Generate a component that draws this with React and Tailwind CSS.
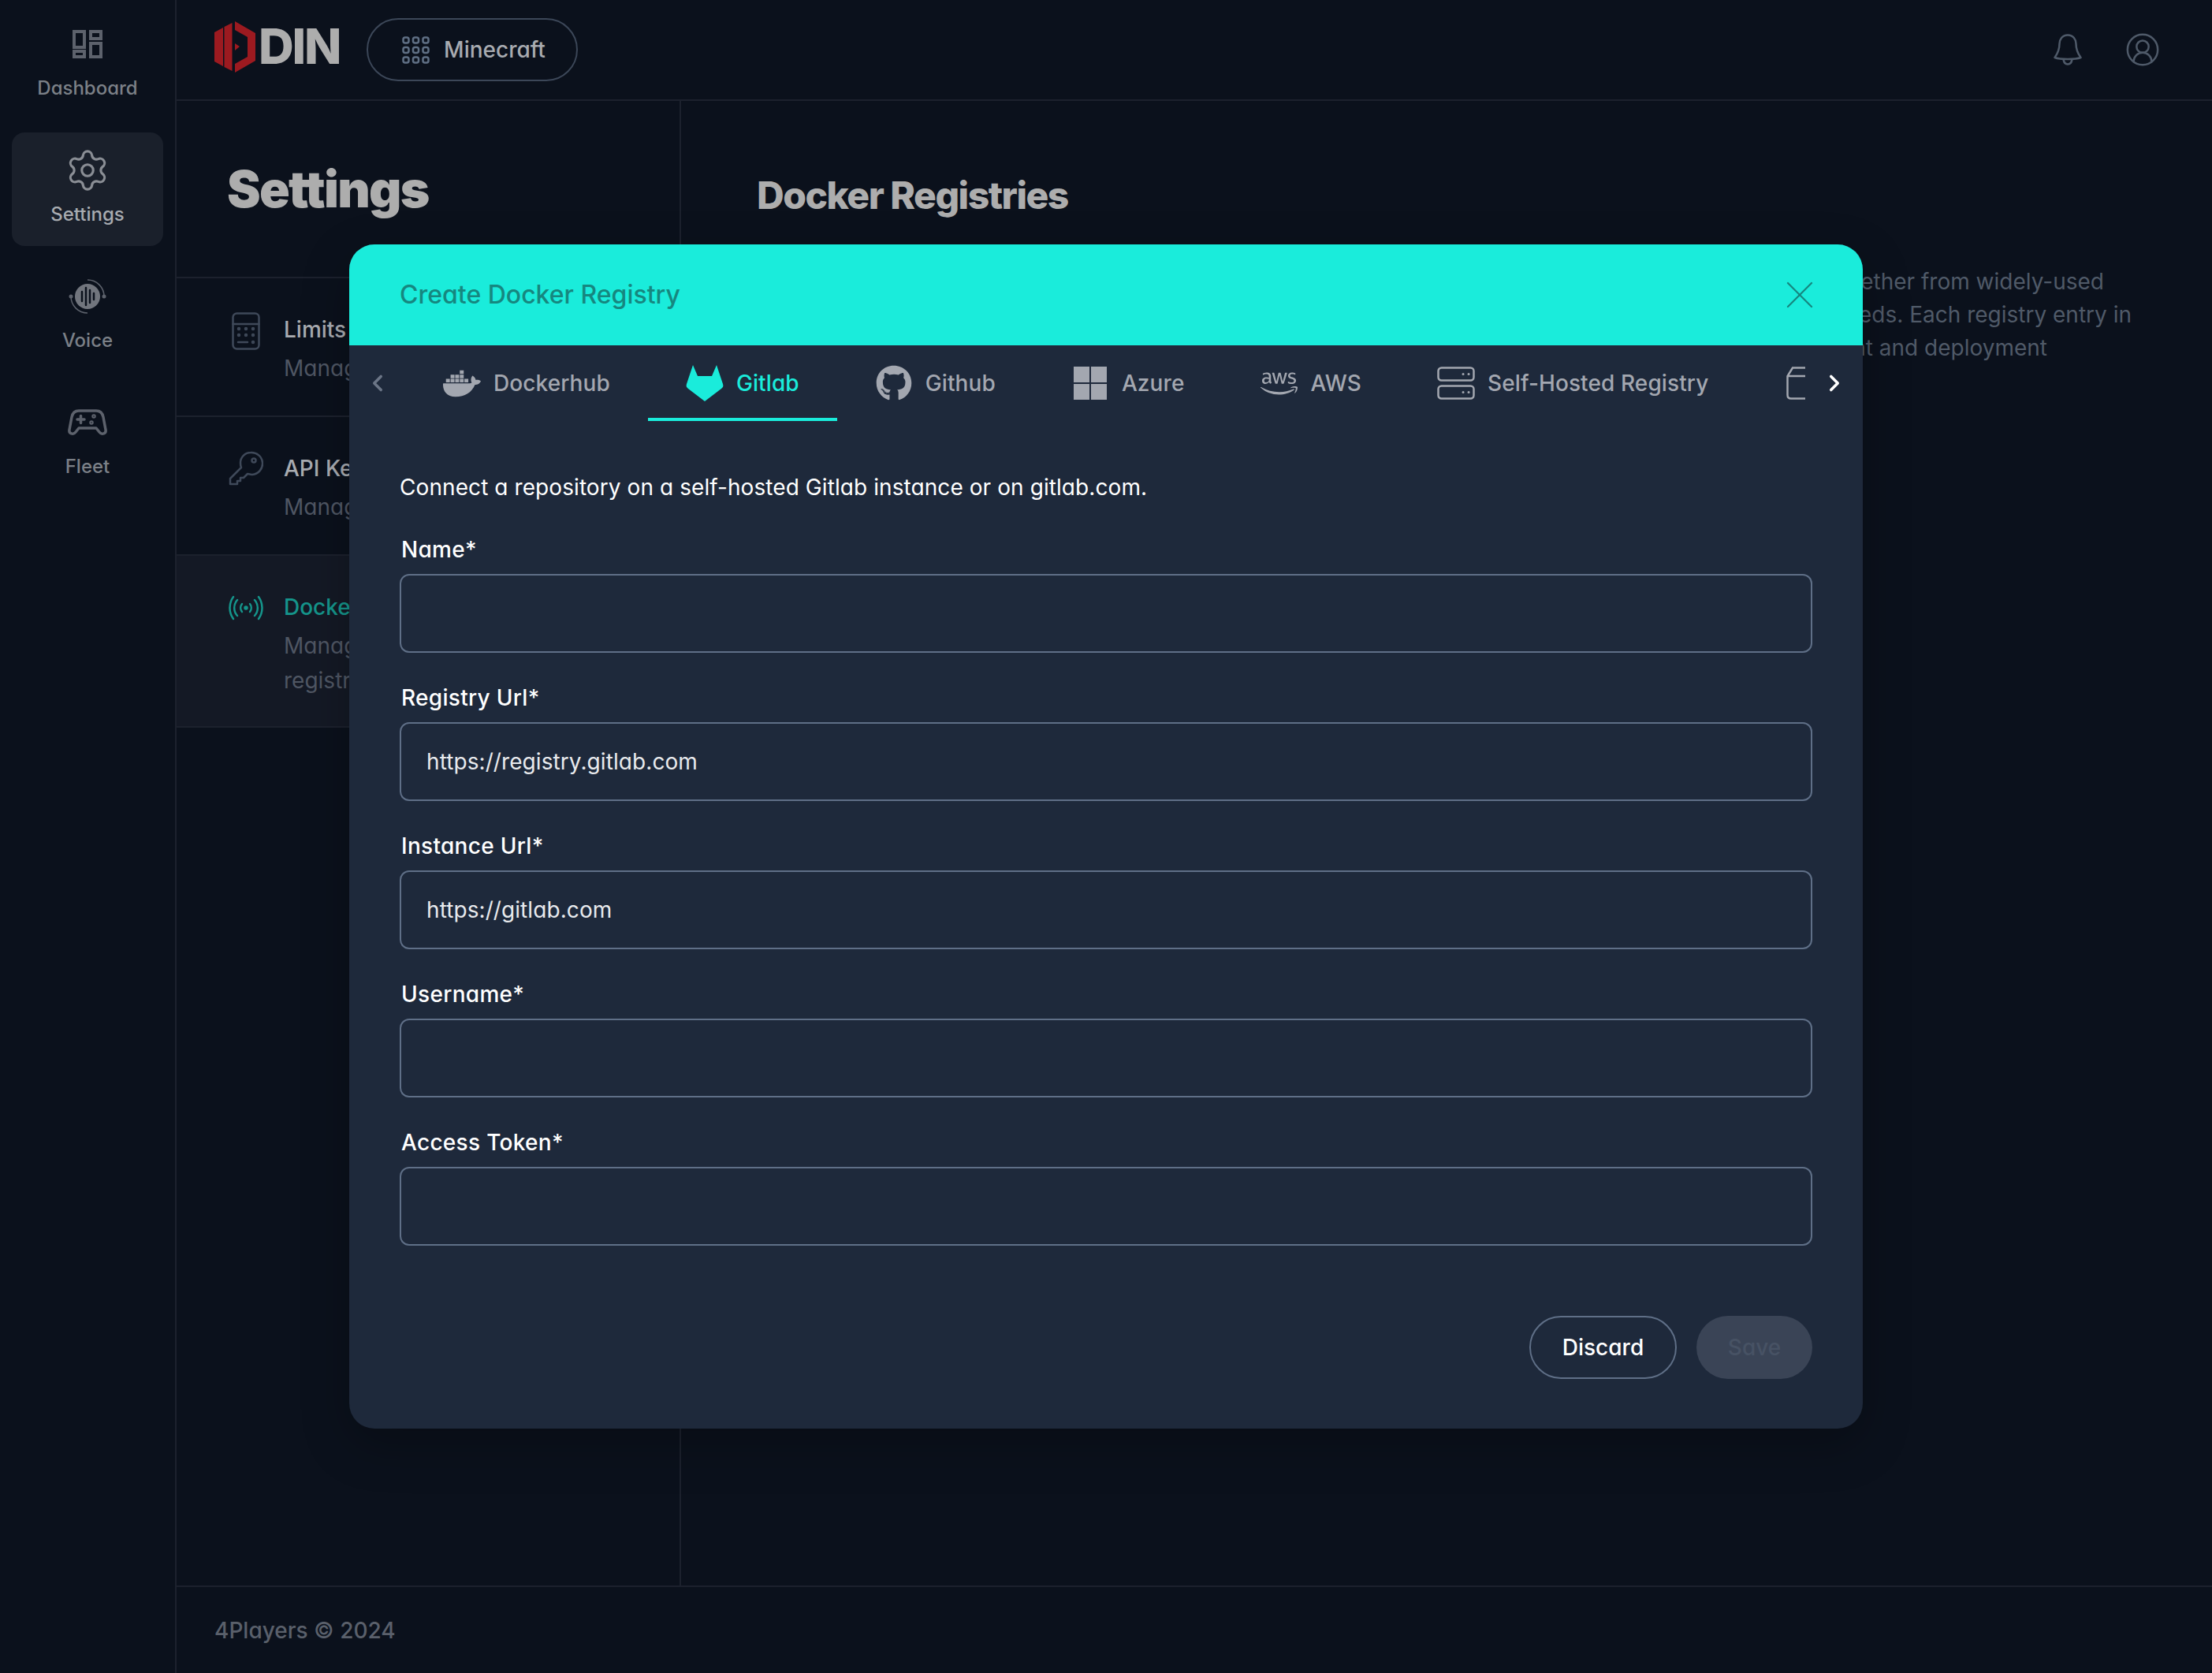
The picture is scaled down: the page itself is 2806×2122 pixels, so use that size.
import { ChevronLeft, ChevronRight, CircleUserRound, Settings, X } from 'lucide-react';
import { FaAws, FaDocker, FaGithub } from 'react-icons/fa';

const fields = [
  { label: 'Name*', value: '' },
  { label: 'Registry Url*', value: 'https://registry.gitlab.com' },
  { label: 'Instance Url*', value: 'https://gitlab.com' },
  { label: 'Username*', value: '' },
  { label: 'Access Token*', value: '' },
];

const OdinMark = () => (
  <svg width="52" height="65" viewBox="0 0 52 65" fill="#9c1a20">
    <path d="M0 14L11 8V57L0 51Z" />
    <path d="M12.500 7L22.500 2V63L12.500 58Z" />
    <path d="M26 0L52 15V50L26 65V54L42 45V20L26 11Z" />
    <path d="M26 28L32 32L26 37Z" />
  </svg>
);

const GridIcon = () => (
  <svg width="35" height="35" viewBox="0 0 35 35" fill="none" stroke="#5f6f84" strokeWidth="2.500">
    {[1.500, 14, 26.500].map((y) =>
      [1.500, 14, 26.500].map((x) => <rect key={`${x}-${y}`} x={x} y={y} width="7" height="7" rx="2.500" />),
    )}
  </svg>
);

const DashboardIcon = () => (
  <svg width="38" height="36" viewBox="0 0 38 36" fill="none" stroke="#5d626c" strokeWidth="4">
    <rect x="2" y="2" width="13" height="20" />
    <rect x="23" y="2" width="13" height="9" />
    <rect x="2" y="27" width="13" height="7" />
    <rect x="23" y="17" width="13" height="17" />
  </svg>
);

const VoiceIcon = () => (
  <svg width="50" height="46" viewBox="0 0 50 46" fill="none">
    <circle cx="25" cy="23" r="16" fill="#71757d" />
    <path d="M18 17v12M23 12v22M28 15v16M33 19v8" stroke="#0b111c" strokeWidth="2.500" strokeLinecap="round" />
    <path d="M4 23a21 21 0 0 0 21 21M25 2a21 21 0 0 1 21 21" stroke="#5d626c" strokeWidth="1.500" />
    <circle cx="4" cy="23" r="2.500" fill="#5d626c" />
    <circle cx="46" cy="23" r="2.500" fill="#5d626c" />
  </svg>
);

const FleetIcon = () => (
  <svg width="50" height="34" viewBox="0 0 50 34" fill="none" stroke="#5d626c" strokeWidth="3.500" strokeLinecap="round" strokeLinejoin="round">
    <path d="M14 2h22c5 0 8 3 9 8l3 16c1 5-5 7-8 3l-4-5H14l-4 5c-3 4-9 2-8-3l3-16c1-5 4-8 9-8Z" />
    <path d="M12 13h9M16.500 8.500v9" />
    <circle cx="33" cy="9" r="1" />
    <circle cx="30" cy="17" r="1" />
  </svg>
);

const CalculatorIcon = () => (
  <svg width="36" height="48" viewBox="0 0 36 48" fill="none" stroke="#3f4959" strokeWidth="2.500" strokeLinecap="round">
    <rect x="1.500" y="1.500" width="33" height="45" rx="5" />
    <path d="M1.500 15h33" />
    {[21, 29].map((y) => [9, 18, 27].map((x) => <circle key={`${x}-${y}`} cx={x} cy={y} r="1" />))}
    <path d="M8 38h12" />
    <circle cx="27" cy="38" r="1" />
  </svg>
);

const KeyIcon = () => (
  <svg width="44" height="44" viewBox="0 0 44 44" fill="none" stroke="#3f4959" strokeWidth="2.500" strokeLinejoin="round">
    <path d="M28 2a14 14 0 0 1 2 28c-3 0-5-1-6-1l-5 5h-4v4h-4v4H2v-7l14-14c-1-2-1-4-1-6A13 13 0 0 1 28 2Z" />
    <circle cx="32" cy="12" r="2.500" />
  </svg>
);

const AntennaIcon = () => (
  <svg width="44" height="32" viewBox="0 0 44 32" className="mt-[7px]" fill="none" stroke="#15958b" strokeWidth="2.500" strokeLinecap="round">
    <circle cx="22" cy="16" r="1.500" fill="#15958b" />
    <path d="M17 11a8 8 0 0 0 0 10M27 11a8 8 0 0 1 0 10" />
    <path d="M11 6a15 15 0 0 0 0 20M33 6a15 15 0 0 1 0 20" />
    <path d="M6 2a24 24 0 0 0 0 28M38 2a24 24 0 0 1 0 28" />
  </svg>
);

const BellIcon = () => (
  <svg width="36" height="40" viewBox="0 0 36 40" fill="none" stroke="#4f5a69" strokeWidth="2.500" strokeLinejoin="round">
    <path d="M18 1.500c-7 0-10.500 5.500-10.500 11 0 8-2 12-6 17.500 5 2 11 2 16.500 2s11.500 0 16.500-2c-4-5.500-6-9.500-6-17.500 0-5.500-3.500-11-10.500-11Z" />
    <path d="M12.500 32c.5 4 2.500 6.500 5.500 6.500s5-2.500 5.500-6.500" />
  </svg>
);

const GitlabIcon = () => (
  <svg width="48" height="46" viewBox="0 0 48 46" fill="currentColor">
    <path d="M9 0L15 14H33L39 0L47 24C48 27 47 28 45 30L24 46L3 30C1 28 0 27 1 24Z" />
  </svg>
);

const AzureIcon = () => (
  <svg width="42" height="42" viewBox="0 0 42 42" fill="#a3a7b0">
    <rect width="20" height="20" />
    <rect x="22" width="20" height="20" />
    <rect y="22" width="20" height="20" />
    <rect x="22" y="22" width="20" height="20" />
  </svg>
);

const ServerIcon = () => (
  <svg width="48" height="42" viewBox="0 0 48 42" fill="none" stroke="#a3a7b0" strokeWidth="2.500" strokeLinecap="round">
    <rect x="1.500" y="1.500" width="45" height="16" rx="4" />
    <rect x="1.500" y="24.500" width="45" height="16" rx="4" />
    <path d="M33 9.500h.1M40 9.500h.1M33 32.500h.1M40 32.500h.1" strokeWidth="3" />
  </svg>
);

const Tab = ({ icon, label, active }) => (
  <div
    className={`flex h-[96px] shrink-0 items-center gap-4 border-b-4 px-12 pt-1 text-[28px] font-medium tracking-[0.1px] ${
      active ? 'border-[#1aecdb] text-[#1aecdb]' : 'border-transparent text-[#a3a7b0]'
    }`}
  >
    <span className="flex w-12 justify-center">{icon}</span>
    <span>{label}</span>
  </div>
);

const NavItem = ({ icon, label, active }) => (
  <div
    className={`flex h-[144px] w-[192px] flex-col items-center justify-center gap-[13px] rounded-2xl text-[24px] font-medium ${
      active ? 'bg-[#1a202b] text-[#a8abb0]' : 'text-[#7b8087]'
    }`}
  >
    <div className="flex h-[50px] items-center">{icon}</div>
    <span className="leading-[36px]">{label}</span>
  </div>
);

const SettingsRow = ({ icon, title, text, active }) => (
  <div className={`flex gap-[26px] border-b-2 border-[#1c212d] pt-[43px] pl-[66px] ${active ? 'bg-[#141925] pb-[36px]' : 'pb-[38px]'}`}>
    <div className="flex w-[44px] shrink-0 items-start justify-center">{icon}</div>
    <div className="flex flex-col gap-[5px] text-[28px] leading-[44px]">
      <span className={`font-medium ${active ? 'text-[#15958b]' : 'text-[#a8abb0]'}`}>{title}</span>
      <span className="font-normal text-[#4f5663]">{text}</span>
    </div>
  </div>
);

export default function App() {
  return (
    <div className="relative flex h-screen w-screen overflow-hidden bg-[#0b111c] font-['Inter',sans-serif] [font-feature-settings:'cv11']">
      {/* Sidebar */}
      <aside className="flex w-[224px] shrink-0 flex-col items-center gap-4 border-r-2 border-[#1c212d] pt-2">
        <NavItem icon={<DashboardIcon />} label="Dashboard" />
        <NavItem icon={<Settings size={58} strokeWidth={1.300} color="#8a8e95" />} label="Settings" active />
        <NavItem icon={<VoiceIcon />} label="Voice" />
        <NavItem icon={<FleetIcon />} label="Fleet" />
      </aside>

      <div className="flex min-w-0 flex-1 flex-col">
        {/* Header */}
        <header className="flex h-[128px] shrink-0 items-center border-b-2 border-[#1c212d] pr-[65px] pl-[48px]">
          <div className="mb-[8px] flex items-center gap-[4px]">
            <OdinMark />
            <span className="text-[62px] leading-none font-extrabold tracking-[-2.300px] text-[#adadad]">DIN</span>
          </div>
          <div className="ml-[34px] flex h-[80px] w-[268px] items-center gap-[18px] rounded-full border-2 border-[#3c4758] pl-[43px] text-[28px] font-medium text-[#a8abb0]">
            <GridIcon />
            <span>Minecraft</span>
          </div>
          <div className="ml-auto flex items-center gap-[54px]">
            <BellIcon />
            <CircleUserRound size={46} strokeWidth={1.300} color="#4f5a69" />
          </div>
        </header>

        <div className="flex min-h-0 flex-1">
          {/* Settings list */}
          <div className="w-[640px] shrink-0 border-r-2 border-[#1c212d]">
            <div className="flex h-[225px] items-start border-b-2 border-[#1c212d] pt-[70px] pl-[64px]">
              <h1 className="text-[64px] leading-[84px] font-black tracking-[-1.700px] text-[#adadad]">Settings</h1>
            </div>
            <SettingsRow icon={<CalculatorIcon />} title="Limits" text="Manage your limits" />
            <SettingsRow icon={<KeyIcon />} title="API Keys" text="Manage your API keys" />
            <SettingsRow
              icon={<AntennaIcon />}
              title="Docker Registries"
              text="Manage your private Docker image registries"
              active
            />
          </div>

          {/* Page content */}
          <main className="min-w-0 flex-1 pt-[88px] pl-[96px]">
            <h2 className="text-[48px] leading-[64px] font-extrabold tracking-[-1.500px] text-[#adadad]">Docker Registries</h2>
            <div className="mt-[56px] text-[28px] leading-[42px] whitespace-nowrap text-[#505a68] [font-feature-settings:normal]">
              <p className="flex w-[1709px] justify-end">
                Manage your Docker registries here and connect them to your fleets and builds, whether from widely-used
              </p>
              <p className="flex w-[1744px] justify-end">
                services or your own self-hosted setup, depending on your specific project needs. Each registry entry in
              </p>
              <p className="flex w-[1637px] justify-end">
                this list can then be selected for the automated build, image management and deployment
              </p>
            </div>
          </main>
        </div>

        {/* Footer */}
        <footer className="flex h-[111px] shrink-0 items-center border-t-2 border-[#1c212d] pl-[48px] text-[28px] font-medium text-[#5a606b]">
          4Players © 2024
        </footer>
      </div>

      {/* Modal */}
      <div className="absolute inset-0 flex items-center justify-center">
        <div className="flex h-[1502px] w-[1920px] flex-col overflow-hidden rounded-[32px] bg-[#1e293b] shadow-[0_20px_60px_rgba(0,0,0,0.25)]">
          <div className="flex h-[128px] shrink-0 items-center justify-between bg-[#1aecdb] pr-[50px] pl-[64px]">
            <span className="text-[32px] font-medium text-[#16877f]">Create Docker Registry</span>
            <X size={60} strokeWidth={0.900} color="#16877f" />
          </div>

          <div className="flex h-[96px] shrink-0 items-center">
            <div className="flex w-[71px] shrink-0 justify-center">
              <ChevronLeft size={34} strokeWidth={2.500} color="#6b7586" />
            </div>
            <div className="flex min-w-0 flex-1 overflow-hidden">
              <Tab icon={<FaDocker size={49} color="#a3a7b0" />} label="Dockerhub" />
              <Tab icon={<GitlabIcon />} label="Gitlab" active />
              <Tab icon={<FaGithub size={46} color="#a3a7b0" />} label="Github" />
              <Tab icon={<AzureIcon />} label="Azure" />
              <Tab icon={<FaAws size={47} color="#a3a7b0" />} label="AWS" />
              <Tab icon={<ServerIcon />} label="Self-Hosted Registry" />
              <Tab
                icon={
                  <svg width="42" height="42" viewBox="0 0 42 42" fill="none" stroke="#a3a7b0" strokeWidth="2.500">
                    <path d="M24 1.500H8L1.500 12v24c0 3 2 4.500 4.500 4.500h18M1.500 12H24" />
                  </svg>
                }
                label=""
              />
            </div>
            <div className="flex w-[73px] shrink-0 justify-center">
              <ChevronRight size={34} strokeWidth={2.500} color="#ffffff" />
            </div>
          </div>

          <div className="flex flex-1 flex-col px-[64px] pt-[62px]">
            <p className="text-[28px] leading-[44px] tracking-[0.08px] text-white">
              Connect a repository on a self-hosted Gitlab instance or on gitlab.com.
            </p>
            <div className="mt-[35px] flex flex-col gap-[35px]">
              {fields.map((field) => (
                <label key={field.label} className="flex flex-col gap-[9px]">
                  <span className="pl-[2px] text-[28px] leading-[44px] font-medium tracking-[0.3px] text-white">{field.label}</span>
                  <input
                    readOnly
                    value={field.value}
                    className="h-[100px] w-full rounded-xl border-2 border-[#5f6f87] bg-transparent px-[32px] text-[28px] tracking-[0.08px] text-[#e8eaed] outline-none"
                  />
                </label>
              ))}
            </div>
            <div className="mt-[89px] flex justify-end gap-[25px] text-[28px] font-medium">
              <button className="h-[80px] w-[187px] rounded-full border-2 border-[#5f6f87] text-white">Discard</button>
              <button className="h-[80px] w-[147px] rounded-full bg-[#3a4456] text-[#475264]">Save</button>
            </div>
          </div>
        </div>
      </div>
    </div>
  );
}
